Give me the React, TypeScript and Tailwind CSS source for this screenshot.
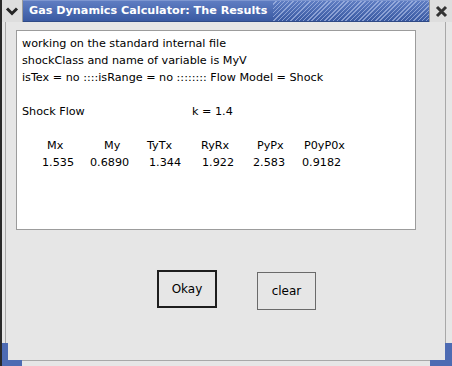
import React from 'react';

const rows = {
  heads: [
    { t: 'Mx', w: 'w-[57px]' },
    { t: 'My', w: 'w-[43px]' },
    { t: 'TyTx', w: 'w-[54px]' },
    { t: 'RyRx', w: 'w-[56px]' },
    { t: 'PyPx', w: 'w-[47px]' },
    { t: 'P0yP0x', w: 'w-auto' },
  ],
  vals: [
    { t: '1.535', w: 'w-[48px]' },
    { t: '0.6890', w: 'w-[59px]' },
    { t: '1.344', w: 'w-[53px]' },
    { t: '1.922', w: 'w-[51px]' },
    { t: '2.583', w: 'w-[49px]' },
    { t: '0.9182', w: 'w-auto' },
  ],
};

const TitleBar = () => (
  <div className="flex h-[22px] shrink-0">
    {/* window menu */}
    <div className="flex w-[21px] shrink-0 items-center justify-center border-r border-[#9a9a9a] bg-[#dedede]">
      <svg width="14" height="10" viewBox="0 0 14 10" className="shrink-0">
        <path d="M2 2.5 L7 7.5 L12 2.5" fill="none" stroke="#262626" strokeWidth="3" />
      </svg>
    </div>
    <div className="flex flex-1 items-center border-b border-t border-b-[#2f4a86] border-t-[#7d96d0] bg-gradient-to-b from-[#5f7dc2] to-[#3a5aa2] pl-[6px]">
      <span className="whitespace-nowrap font-['DejaVu_Sans',sans-serif] text-[11.2px] font-bold text-white">
        Gas Dynamics Calculator: The Results
      </span>
      <div className="ml-[6px] h-full flex-1 bg-[repeating-linear-gradient(135deg,transparent_0px,transparent_2px,rgba(185,200,238,0.6)_2px,rgba(185,200,238,0.6)_3px)]" />
    </div>
    {/* close */}
    <div className="flex w-[23px] shrink-0 items-center justify-center border-l border-[#9a9a9a] bg-[#dedede]">
      <svg width="13" height="13" viewBox="0 0 13 13" className="shrink-0">
        <path d="M2 2 L11 11 M11 2 L2 11" stroke="#333333" strokeWidth="3" />
      </svg>
    </div>
  </div>
);

export default function App() {
  return (
    <div className="relative flex h-[366px] w-[452px] flex-col overflow-hidden border-l-2 border-[#2a2a2a] bg-[#e6e6e6] font-['DejaVu_Sans',sans-serif] text-black">
      <TitleBar />
      <div className="flex flex-1 flex-col pb-[5px] pl-[3px] pr-[6px]">
        <div className="flex flex-1 flex-col border-b border-l border-r border-[#a8a8a8] pl-[10px] pt-[8px]">
          {/* result text area */}
          <div className="h-[200px] w-[400px] border border-[#9c9c9c] bg-white pl-[5px] pt-[4px] text-[11.2px] leading-[17px]">
            <div>working on the standard internal file</div>
            <div>shockClass and name of variable is MyV</div>
            <div>isTex = no ::::isRange = no :::::::: Flow Model = Shock</div>
            <div>&nbsp;</div>
            <div className="flex">
              <span className="w-[170px]">Shock Flow</span>
              <span>k = 1.4</span>
            </div>
            <div>&nbsp;</div>
            <div className="flex pl-[25px]">
              {rows.heads.map((h) => (
                <span key={h.t} className={h.w}>{h.t}</span>
              ))}
            </div>
            <div className="flex pl-[20px]">
              {rows.vals.map((v) => (
                <span key={v.t} className={v.w}>{v.t}</span>
              ))}
            </div>
          </div>
          {/* buttons */}
          <div className="ml-[141px] mt-[40px] flex items-start gap-[40px]">
            <button className="flex h-[38px] w-[60px] items-center justify-center border-2 border-[#1e1e1e] bg-[#e6e6e6] text-[12px]">
              Okay
            </button>
            <button className="mt-[2px] flex h-[38px] w-[59px] items-center justify-center border border-[#6a6a6a] bg-[#e6e6e6] text-[12px]">
              clear
            </button>
          </div>
        </div>
      </div>
      {/* blue frame corners */}
      <div className="absolute bottom-0 left-0 h-[23px] w-[6px] bg-[#4d6bb3]" />
      <div className="absolute bottom-0 left-0 h-[6px] w-[20px] rounded-bl-[3px] bg-[#4d6bb3]" />
      <div className="absolute bottom-0 right-0 h-[23px] w-[7px] bg-[#4d6bb3]" />
      <div className="absolute bottom-0 right-0 h-[6px] w-[22px] rounded-br-[3px] bg-[#4d6bb3]" />
    </div>
  );
}
